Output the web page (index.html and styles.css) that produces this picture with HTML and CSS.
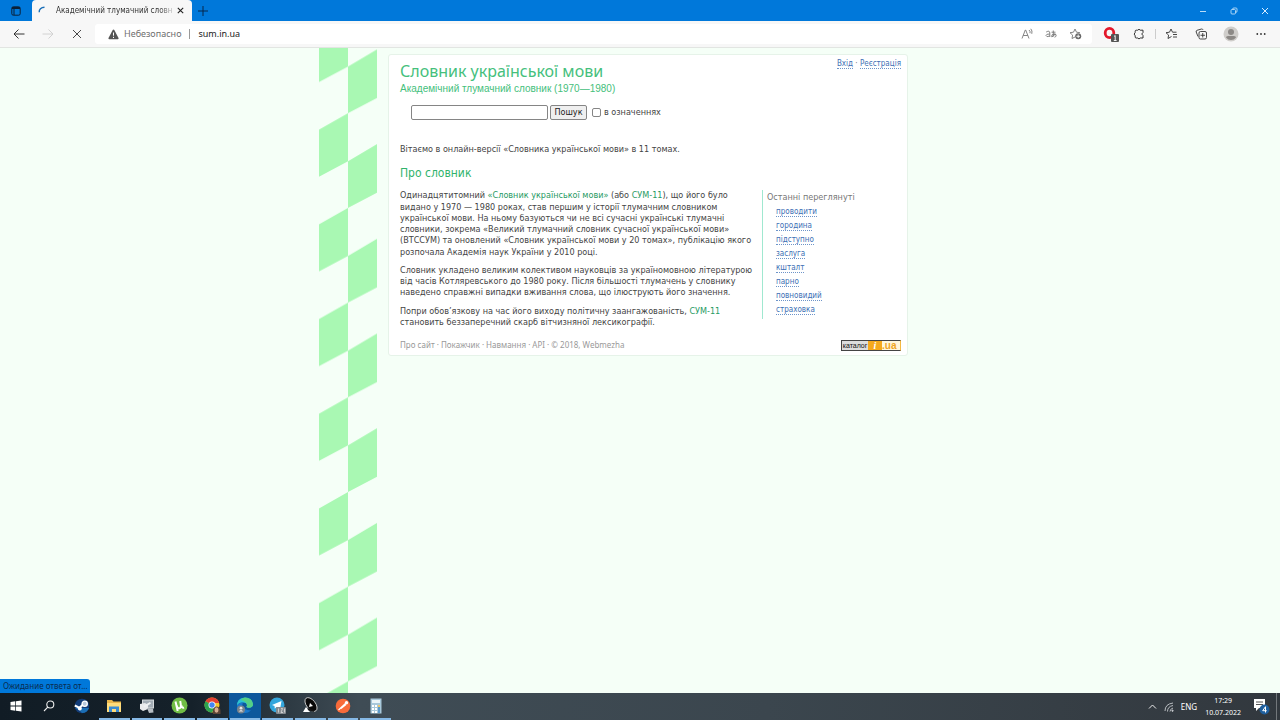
FILE: index.html
```html
<!DOCTYPE html>
<html lang="uk">
<head>
<meta charset="utf-8">
<title>Академічний тлумачний словник</title>
<link rel="stylesheet" href="styles.css">
</head>
<body>
<div class="screen">
  <header class="titlebar">
    <button class="tab-actions" aria-label="Вкладки"><svg width="10" height="10" viewBox="0 0 10 10" fill="none" stroke="#0b2038"><rect x=".8" y=".8" width="8.4" height="8.4" rx="1.5"/><path d="M1 2h8" stroke-width="2"/><path d="M3 3v6"/></svg></button>
    <div class="tab">
      <svg class="spinner" width="10" height="10" viewBox="0 0 10 10" fill="none" stroke="#1a6fb8" stroke-width="1.4"><path d="M1.2 6.2C1 3.5 3 1.300 6.500 1.200"/></svg>
      <span class="tab-title">Академічний тлумачний словн</span>
      <button class="tab-close" aria-label="Закрити вкладку"><svg width="7" height="7" viewBox="0 0 7 7" stroke="#222" stroke-width="1.100"><path d="M.8.8l5.400 5.400M6.200.8L.8 6.200"/></svg></button>
    </div>
    <button class="new-tab" aria-label="Нова вкладка"><svg width="10" height="10" viewBox="0 0 10 10" stroke="#06264a"><path d="M5 0v10M0 5h10"/></svg></button>
    <div class="window-buttons">
      <button aria-label="Згорнути"><svg width="8" height="8" viewBox="0 0 8 8" stroke="#b9dcf8"><path d="M1 4.500h6"/></svg></button>
      <button aria-label="Відновити"><svg width="8" height="8" viewBox="0 0 8 8" fill="none" stroke="#b9dcf8" stroke-width=".9"><rect x="1" y="2.500" width="4.500" height="4.500" rx="1"/><path d="M2.500 2.200Q2.500 1 4 1H6q1 0 1 1v2q0 1.500-1.200 1.500"/></svg></button>
      <button aria-label="Закрити"><svg width="8" height="8" viewBox="0 0 8 8" stroke="#d8edff"><path d="M1 1l6 6M7 1L1 7"/></svg></button>
    </div>
  </header>

  <nav class="toolbar">
    <div class="nav-buttons">
      <button aria-label="Назад"><svg width="12" height="12" viewBox="0 0 12 12" fill="none" stroke="#333"><path d="M11.500 6H1M5.500 1.500L1 6l4.500 4.500"/></svg></button>
      <button aria-label="Вперед"><svg width="12" height="12" viewBox="0 0 12 12" fill="none" stroke="#d2d2d2"><path d="M.5 6H11M6.500 1.500L11 6l-4.500 4.500"/></svg></button>
      <button aria-label="Зупинити"><svg width="12" height="12" viewBox="0 0 12 12" stroke="#333" stroke-width=".9"><path d="M2 2l8 8M10 2l-8 8"/></svg></button>
    </div>
    <div class="address">
      <svg width="11" height="11" viewBox="0 0 11 11"><path d="M5.500.5q.5 0 .8.500l4.200 8q.4 1-.6 1.200H1.100Q.1 10 .5 9L4.700 1q.3-.5.8-.5z" fill="#555"/><path d="M5.500 3.500v3.200M5.500 7.800v1.200" stroke="#fff"/></svg>
      <span class="insecure">Небезопасно</span>
      <input class="url" type="text" value="sum.in.ua" aria-label="Адреса">
      <button class="address-button" aria-label="Читати вголос"><svg width="12" height="12" viewBox="0 0 12 12" fill="none" stroke="#777" stroke-width=".9"><path d="M1 10.500L4.300 2h.4L8 10.500M2.200 7.500h4.600M8 2q1.500 1.200 1 3.200M9.800.8q1.800 2 1 5"/></svg></button>
      <button class="address-button" aria-label="Перекласти"><svg width="12" height="12" viewBox="0 0 12 12" fill="none" stroke="#777" stroke-width=".9"><path d="M1.200 4Q4.800 2 4.800 5v4M4.800 6Q1 5.800 1 7.600 1.200 9.500 4.800 8M6.500 4.200h4M8.300 2.500v5.800M10 5.500Q8.600 9.200 6.700 8.800 6 6.300 9.300 6q2.500.3 1.800 2-.4 1-1.600 1.200"/></svg></button>
      <button class="address-button" aria-label="Додати до вибраного"><svg width="13" height="12" viewBox="0 0 13 12" fill="none" stroke="#777" stroke-width=".9"><path d="M6 9L3 10.500l.6-3.400L1 4.700l3.500-.5L6 1l1.500 3.200 3.500.5"/><circle cx="9.200" cy="8.300" r="3" fill="#666" stroke="none"/><path d="M9.200 6.500v3.600M7.400 8.300H11" stroke="#fff"/></svg></button>
    </div>
    <div class="tools">
      <button aria-label="Розширення Opera"><svg width="16" height="16" viewBox="0 0 16 16"><ellipse cx="6.500" cy="7" rx="4.300" ry="4.700" fill="none" stroke="#e3182b" stroke-width="2.800"/><rect x="8" y="8" width="8" height="8" rx="1" fill="#555"/><path d="M11 10.500l1.200-1v5M10.800 14.500h2.800" fill="none" stroke="#fff" stroke-width=".9"/></svg></button>
      <button aria-label="Розширення"><svg width="12" height="12" viewBox="0 0 12 12" fill="none" stroke="#333"><path d="M3.200 2.200h1.600q1.200-2 2.400 0H10v2.300q-2.600 1.500 0 3V10H7.200q-1.200 2-2.400 0H3.200q-1 0-1-1V7.800Q.2 6 2.200 4.400V3.200q0-1 1-1z"/></svg></button>
      <span class="tool-divider"></span>
      <button aria-label="Вибране"><svg width="13" height="12" viewBox="0 0 13 12" fill="none" stroke="#333" stroke-width=".9"><path d="M6.500 8.500L3 10.500l.6-3.400L1 4.700l3.500-.5L6 1l1.500 3.200h4M8 6.500h4M8 9h4"/></svg></button>
      <button aria-label="Колекції"><svg width="13" height="12" viewBox="0 0 13 12" fill="none" stroke="#333" stroke-width=".9"><path d="M3 8.500L1.200 4Q.8 2.800 2 2.300L6.500 1q1-.3 1.500.8"/><rect x="4" y="3.500" width="7.500" height="7.500" rx="1.500"/><path d="M7.750 5v4.500M5.500 7.250H10"/></svg></button>
      <button aria-label="Профіль"><svg width="16" height="16" viewBox="0 0 16 16"><circle cx="8" cy="8" r="7.500" fill="#cfcdca"/><circle cx="8" cy="6" r="3" fill="#8c8986"/><path d="M3 11.500Q3 10 5 10h6q2 0 2 1.500Q11 14 8 14t-5-2.500z" fill="#8c8986"/></svg></button>
      <button aria-label="Меню"><svg width="10" height="10" viewBox="0 0 10 10" fill="#333"><circle cx="1.300" cy="5" r=".9"/><circle cx="5" cy="5" r=".9"/><circle cx="8.700" cy="5" r=".9"/></svg></button>
    </div>
  </nav>

  <main class="page">
    <svg class="stripe" aria-hidden="true">
      <defs><pattern id="braid" width="58" height="94.700" patternUnits="userSpaceOnUse" patternTransform="translate(0 -29.500)"><path d="M0 16.500L29 0V48L0 63.500zM29 48L58 31V79.500L29 94.700z" fill="#a9f8b3"/></pattern></defs>
      <rect width="58" height="100%" fill="url(#braid)"/>
    </svg>
    <article class="card">
      <header class="card-head">
        <div>
          <h1>Словник української мови</h1>
          <p class="subtitle">Академічний тлумачний словник (1970—1980)</p>
        </div>
        <div class="account"><a href="#">Вхід</a> · <a href="#">Реєстрація</a></div>
      </header>
      <form class="search">
        <input class="query" type="text" aria-label="Слово">
        <button class="submit" type="button">Пошук</button>
        <input class="check" type="checkbox" id="defs">
        <label for="defs">в означеннях</label>
      </form>
      <p class="welcome">Вітаємо в онлайн-версії «Словника української мови» в 11 томах.</p>
      <h2>Про словник</h2>
      <div class="columns">
        <section class="about">
          <p>Одинадцятитомний <a href="#">«Словник української мови»</a> (або <a href="#">СУМ-11</a>), що його було<br>видано у 1970 — 1980 роках, став першим у історії тлумачним словником<br>української мови. На ньому базуються чи не всі сучасні українські тлумачні<br>словники, зокрема «Великий тлумачний словник сучасної української мови»<br>(ВТССУМ) та оновлений «Словник української мови у 20 томах», публікацію якого<br>розпочала Академія наук України у 2010 році.</p>
          <p>Словник укладено великим колективом науковців за україномовною літературою<br>від часів Котляревського до 1980 року. Після більшості тлумачень у словнику<br>наведено справжні випадки вживання слова, що ілюструють його значення.</p>
          <p>Попри обов’язкову на час його виходу політичну заангажованість, <a href="#">СУМ-11</a><br>становить беззаперечний скарб вітчизняної лексикографії.</p>
        </section>
        <aside class="recent">
          <h3>Останні переглянуті</h3>
          <ul>
            <li><a href="#">проводити</a></li>
            <li><a href="#">городина</a></li>
            <li><a href="#">підступно</a></li>
            <li><a href="#">заслуга</a></li>
            <li><a href="#">кшталт</a></li>
            <li><a href="#">парно</a></li>
            <li><a href="#">повновидий</a></li>
            <li><a href="#">страховка</a></li>
          </ul>
        </aside>
      </div>
      <footer class="card-foot">
        <div><a href="#">Про сайт</a> · <a href="#">Покажчик</a> · <a href="#">Навмання</a> · <a href="#">API</a> · © 2018, Webmezha</div>
        <a class="counter" href="#"><span class="counter-name">каталог</span><span class="counter-i">i</span><span class="counter-ua">.ua</span></a>
      </footer>
    </article>
    <div class="status">Ожидание ответа от...</div>
  </main>

  <footer class="taskbar">
    <div class="tasks">
    <button class="task" aria-label="Пуск"><svg width="12" height="12" viewBox="0 0 12 12" fill="#fff"><path d="M.5 2l4.800-.7v4.300H.5zM6 1.200L11.500.5v5.100H6zM.5 6.400h4.800v4.300L.5 10zM6 6.400h5.500v5.100L6 10.800z"/></svg></button>
    <button class="task" aria-label="Пошук"><svg width="12" height="12" viewBox="0 0 12 12" fill="none" stroke="#eee" stroke-width="1.100"><circle cx="7.300" cy="4.500" r="3.500"/><path d="M4.800 7.200L1 11"/></svg></button>
    <button class="task" aria-label="Steam"><svg width="16" height="16" viewBox="0 0 16 16"><circle cx="8" cy="8" r="7.300" fill="#123c78"/><path d="M1 10l4 2 3 3q5 0 7-5" fill="#1b6fb5"/><path d="M.8 7.500l4.700 2.300L9 6.500" fill="none" stroke="#fff" stroke-width="2"/><circle cx="10.700" cy="5.700" r="2.600" fill="#b8c8dc" stroke="#fff" stroke-width="1.300"/><circle cx="5.800" cy="10.500" r="2" fill="#fff"/></svg></button>
    <button class="task open" aria-label="Провідник"><svg width="16" height="16" viewBox="0 0 16 16"><path d="M1 2h5l1.500 1.500H15V14H1z" fill="#eab64c"/><path d="M1 5h14v9H1z" fill="#ffdc7b"/><path d="M3 14V8.500h10V14h-3v-3H6v3z" fill="#3b8bd2"/></svg></button>
    <button class="task open" aria-label="Комп’ютер"><svg width="16" height="16" viewBox="0 0 16 16"><path d="M3 1.500h12v9H3z" fill="#d4d9dc"/><path d="M4 2.500h10v7H4z" fill="#a2acb5"/><path d="M1 6l5-1 3 2v4l-5 2-3-2z" fill="#e8eaec"/><path d="M8 10l6 .5.500 4-4.500.5z" fill="#b7bec4"/><path d="M4 8l7-4 1 1.500-6 4z" fill="#edf0f2"/></svg></button>
    <button class="task open" aria-label="uTorrent"><svg width="17" height="17" viewBox="0 0 17 17"><circle cx="8.500" cy="8.500" r="8" fill="#70bd45"/><path d="M4.500 4.500l2.200 9.500M5.600 8.500q1.200 3.800 3.500 2.400Q10.500 10 9.200 4M10.500 8.500q.4 3 2.500 2" fill="none" stroke="#fff" stroke-width="2"/></svg></button>
    <button class="task open" aria-label="Chrome"><svg width="17" height="17" viewBox="0 0 17 17"><circle cx="8" cy="8" r="7.500" fill="#f5c62d"/><path d="M8 8L1.500 4.200A7.500 7.500 0 0114.500 4.200L15 6H8z" fill="#e34133"/><path d="M8 8L1.500 4.200A7.500 7.500 0 008 15.500l3-5z" fill="#2da350"/><circle cx="8" cy="8" r="3.500" fill="#fff"/><circle cx="8" cy="8" r="2.700" fill="#4285f4"/><path d="M9 17q-1-6 3-7.500 4 0 4.500 4v3.500z" fill="#5c4436"/><ellipse cx="12.500" cy="13" rx="2" ry="2.700" fill="#d7ad91"/></svg></button>
    <button class="task open current" aria-label="Edge"><svg width="18" height="17" viewBox="0 0 18 17"><path d="M1 10Q0 1 9 0.500q7 0 8 6.500 0 4-4.500 3.800-3-.3-1.500-2.300 0-3-4-3-5.500 0-6 4.500z" fill="#2cc3d2"/><path d="M9 .5q7 0 8 6.500 0 4-4.500 3.800-3-.3-1.500-2.300 0-4-6-5.500Q6 .5 9 .5z" fill="#55cf86"/><path d="M1 9Q2 5.500 7 5.500q-3 7 8 8-6 5-12 0Q1 12 1 9z" fill="#1979ce"/><circle cx="5" cy="12.500" r="4" fill="#78838c"/><circle cx="5" cy="11.200" r="1.400" fill="#e5e5e5"/><path d="M2.700 14.500q2.300-3 4.600 0z" fill="#e5e5e5"/></svg></button>
    <button class="task open" aria-label="Telegram"><svg width="17" height="17" viewBox="0 0 17 17"><circle cx="8" cy="8" r="7.500" fill="#34a6dc"/><path d="M3 8l9.500-4L11 12.500 7.500 10l-1.700 1.700L5.500 9z" fill="#fff"/><rect x="7" y="10" width="10" height="7" rx="1" fill="#858b90"/><path d="M9.500 11.500v4M12 11.500h1.500l-1.500 4h2M15.500 11.500v4" stroke="#ddd" stroke-width=".8" fill="none"/></svg></button>
    <button class="task open" aria-label="Супутник"><svg width="18" height="18" viewBox="0 0 18 18"><ellipse cx="10" cy="7.500" rx="4.500" ry="8" transform="rotate(-38 10 7.500)" fill="#090909" stroke="#ddd" stroke-width=".8"/><path d="M9 6l3 3-4 1zM5 10l4 5H2z" fill="#fff"/><path d="M7 12l6 2" stroke="#111" stroke-width="2"/></svg></button>
    <button class="task open" aria-label="Postman"><svg width="16" height="16" viewBox="0 0 16 16"><circle cx="8" cy="8" r="7.300" fill="#f86b3a"/><path d="M3.500 12L11 5M6 10.500l5-4" stroke="#fff" stroke-width="1.200"/><circle cx="11.500" cy="4.800" r="1.700" fill="#fff"/></svg></button>
    <button class="task open" aria-label="Калькулятор"><svg width="14" height="16" viewBox="0 0 14 16"><path d="M1.500.5h11v15h-11z" fill="#a8c8da"/><path d="M3 2h8v3H3z" fill="#eaf4f7"/><path d="M3 7h2v2H3zM6 7h2v2H6zM3 10h2v2H3zM6 10h2v2H6zM3 13h2v2H3zM6 13h2v2H6z" fill="#fff"/><path d="M9 7h2v8H9z" fill="#5c9aca"/><path d="M9 7h2v2H9z" fill="#e9c66a"/></svg></button>
    </div>
    <div class="tray">
      <svg width="9" height="9" viewBox="0 0 9 9" fill="none" stroke="#eee"><path d="M1 6.500l3.500-3.500L8 6.500"/></svg>
      <svg width="10" height="10" viewBox="0 0 10 10" fill="none" stroke="#b8bcc0"><path d="M1 9Q1 2 9 1M3.500 9.500Q3.500 4.500 9 3.500M6 9.500Q6 7 9 6"/><circle cx="8.500" cy="8.700" r=".7" fill="#eee"/></svg>
      <span class="lang">ENG</span>
      <time class="clock">17:29<br>10.07.2022</time>
      <svg class="notes" width="17" height="17" viewBox="0 0 17 17"><path d="M1 1h11v9H6l-3 3v-3H1z" fill="#fff"/><path d="M3 4h7M3 6.500h7" stroke="#555"/><circle cx="11.500" cy="11.500" r="5" fill="#1e5f9e"/><path d="M12.500 14.500V8.700L9.700 12.700h4" fill="none" stroke="#fff"/></svg>
      <span class="desktop-edge"></span>
    </div>
  </footer>
</div>
</body>
</html>
```
FILE: styles.css
```css
* { box-sizing: border-box; }
body { margin: 0; font-family: "Noto Sans", sans-serif; }
button { margin: 0; padding: 0; border: 0; background: none; display: flex; align-items: center; justify-content: center; font: inherit; color: inherit; }
svg { display: block; flex: none; }
a { text-decoration: none; color: inherit; }
h1, h2, h3, p, ul { margin: 0; padding: 0; font-weight: normal; }
.screen { display: flex; flex-direction: column; min-height: 100vh; }

.titlebar { display: flex; align-items: stretch; height: 21px; background: #0078da; }
.tab-actions { width: 32px; }
.tab { display: flex; align-items: center; width: 160px; padding: 0 8px 0 6px; gap: 4px; background: #f7f7f7; border-radius: 4px 4px 0 0; }
.tab-title { flex: 1; margin-left: 4px; white-space: nowrap; font-family: "DejaVu Sans Condensed", sans-serif; font-size: 8px; line-height: 12px; color: #333; -webkit-mask-image: linear-gradient(90deg, #000 85%, transparent); mask-image: linear-gradient(90deg, #000 85%, transparent); }
.tab-close { margin-left: -4px; }
.new-tab { width: 22px; }
.window-buttons { display: flex; margin-left: auto; }
.window-buttons button { width: 31px; }

.toolbar { display: flex; align-items: center; height: 27px; background: #f7f7f7; border-bottom: 1px solid #e2e5e2; }
.nav-buttons { display: flex; gap: 17px; padding: 0 12px 0 13px; }
.address { display: flex; align-items: center; flex: 1; height: 20px; padding: 0 5px 0 13px; background: #fff; border-radius: 3px; }
.insecure { margin-left: 5px; padding-right: 8px; border-right: 1px solid #999; font-size: 9px; line-height: 10px; color: #707070; }
.url { flex: 1; min-width: 0; padding: 0 8px; border: 0; background: none; font: 9px/12px "Noto Sans", sans-serif; color: #222; outline: 0; }
.address-button { width: 24px; }
.tools { display: flex; align-items: center; padding-right: 4px; }
.tools button { width: 30px; }
.tools button:first-child { width: 38px; }
.tools button:nth-child(2) { width: 18px; }
.tool-divider { width: 1px; height: 10px; margin-left: 7px; background: #ccc; }

.page { position: relative; flex: 1; display: flex; align-items: flex-start; background: #f5fff7; padding-left: calc(25% - 1px); }
.stripe { align-self: stretch; width: 58px; height: auto; }
.card { display: flex; flex-direction: column; flex: 0 1 520px; margin: 6px 0 0 11px; padding: 6px 6px 4px 11px; background: #fff; border: 1px solid #e6f3e9; border-radius: 3px; font: 9px/1.25 "DejaVu Sans Condensed", "DejaVu Sans", sans-serif; color: #444; }
.card-head { display: flex; justify-content: space-between; align-items: flex-start; white-space: nowrap; }
h1 { font: 16px/20px "Noto Sans", sans-serif; color: #45c07c; }
.subtitle { font: 10px/15px "Liberation Sans", sans-serif; color: #45c07c; }
.account { margin-top: -3px; font-size: 8px; line-height: 12px; color: #777; }
.account a, .recent a { color: #3d6fb5; border-bottom: 1px dotted #6d94c9; }
.search { display: flex; align-items: center; margin: 9px 0 0 11px; }
.query { width: 137px; height: 15px; border: 1px solid #858585; border-radius: 2px; background: #fff; }
.submit { width: 37px; height: 15px; margin: 0 5px 0 2px; background: #efefef; border: 1px solid #858585; border-radius: 2px; font-size: 9px; color: #222; }
.check { appearance: none; width: 9px; height: 9px; margin: 0 3px 0 0; border: 1px solid #858585; border-radius: 2px; background: #fff; }
.welcome { margin-top: 24px; }
h2 { margin-top: 10px; font-size: 12px; line-height: 16px; color: #30b36b; }
.columns { display: flex; margin-top: 9px; }
.about { display: flex; flex-direction: column; gap: 7px; width: 362px; white-space: nowrap; }
.about a { color: #279a63; }
.recent { align-self: flex-start; padding: 0 0 2px 4px; border-left: 1px solid #a0e8d0; }
h3 { font-size: 9px; line-height: 14px; color: #777; }
.recent ul { padding: 1px 0 0 9px; list-style: none; font-size: 8px; line-height: 14px; }
.card-foot { display: flex; justify-content: space-between; align-items: center; margin-top: 11px; font: 8px/12px "Noto Sans", sans-serif; color: #999; }
.counter { display: flex; width: 60px; height: 11px; border: 1px solid #444; border-right-color: #f5b943; font-family: "Liberation Sans", sans-serif; line-height: 9px; }
.counter-name { width: 26px; background: #ddd; color: #111; font-size: 7px; text-align: center; }
.counter-i { width: 14px; background: #f5a91d; color: #fff; font: italic bold 10px/9px "Liberation Serif", serif; text-align: center; }
.counter-ua { flex: 1; background: #fff6dc; color: #f0a51f; font-size: 10px; font-weight: bold; }
.status { position: absolute; left: 0; bottom: 0; width: 90px; padding: 1px 3px; background: #0078da; border-radius: 0 3px 0 0; color: #0a2c50; font-size: 8px; line-height: 12px; white-space: nowrap; }

.taskbar { display: flex; height: 27px; background: linear-gradient(90deg, #111c25 0, #15212a 15%, #3f4c55 28%, #3b464e 60%, #32383e 100%); color: #fff; }
.tasks { display: flex; width: 392px; }
.task { flex: 1; border-bottom: 2px solid transparent; }
.task.open { border-image: linear-gradient(90deg, transparent 10%, #86b9e6 10%, #86b9e6 90%, transparent 90%) 2; }
.task.current { background: #0d589c; }
.tray { display: flex; align-items: center; margin-left: auto; font-size: 8px; line-height: 12px; gap: 7px; }
.clock { font-size: 7px; text-align: center; margin: 0 5px 0 1px; }
.desktop-edge { width: 1px; height: 27px; margin: 0 3px 0 -1px; background: #72777b; }
```
